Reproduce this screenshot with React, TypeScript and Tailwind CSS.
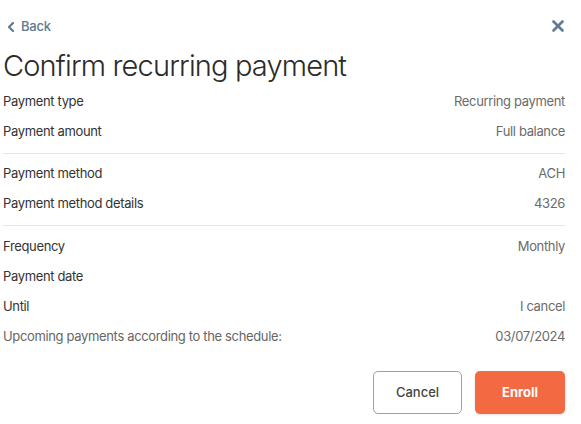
import { ChevronLeft, X } from 'lucide-react';

type Row = { label: string; value: string; muted?: boolean };

const sections: Row[][] = [
  [
    { label: 'Payment type', value: 'Recurring payment' },
    { label: 'Payment amount', value: 'Full balance' },
  ],
  [
    { label: 'Payment method', value: 'ACH' },
    { label: 'Payment method details', value: '4326' },
  ],
  [
    { label: 'Frequency', value: 'Monthly' },
    { label: 'Payment date', value: '' },
    { label: 'Until', value: 'I cancel' },
    { label: 'Upcoming payments according to the schedule:', value: '03/07/2024', muted: true },
  ],
];

export default function App() {
  return (
    <div className="w-[581px] h-[424px] bg-white pl-[3px] pr-[16px] pt-[19px] font-['Inter',sans-serif]">
      <div className="flex items-center justify-between h-4">
        <button className="flex items-center gap-[2px] text-[13px] font-medium tracking-[-0.2px] text-[#5b7a93]">
          <ChevronLeft className="w-4 h-4" strokeWidth={3.25} />
          <span>Back</span>
        </button>
        <X className="w-[18px] h-[18px] text-[#5f7c94] -mr-[2px] -mt-[2px]" strokeWidth={3.5} />
      </div>

      <h1 className="h-[46px] flex items-end pb-[1px] text-[29px] leading-none font-light text-[#2b2b2b] tracking-[-0.85px]">
        Confirm recurring payment
      </h1>

      <div>
        {sections.map((rows, i) => (
          <div
            key={i}
            className={
              i === 0
                ? 'py-[6px] border-b border-[#e6e6e6]'
                : i < sections.length - 1
                  ? 'pt-[5px] pb-[6px] border-b border-[#e6e6e6]'
                  : 'pt-[6px]'
            }
          >
            {rows.map((row) => (
              <div
                key={row.label}
                className="flex items-center justify-between h-[30px] text-[13px] tracking-[-0.35px]"
              >
                <span className={row.muted ? 'text-[#666]' : 'text-[#333]'}>{row.label}</span>
                <span className="text-[#6b6b6b]">{row.value}</span>
              </div>
            ))}
          </div>
        ))}
      </div>

      <div className="flex justify-end gap-[13px] mt-[19px]">
        <button className="w-[89px] h-[43px] rounded-[5px] border border-[#a0a0a0] text-[13px] font-medium text-[#444]">
          Cancel
        </button>
        <button className="w-[90px] h-[43px] rounded-[5px] bg-[#f36a42] text-[13px] font-bold text-white shadow-sm">
          Enroll
        </button>
      </div>
    </div>
  );
}
